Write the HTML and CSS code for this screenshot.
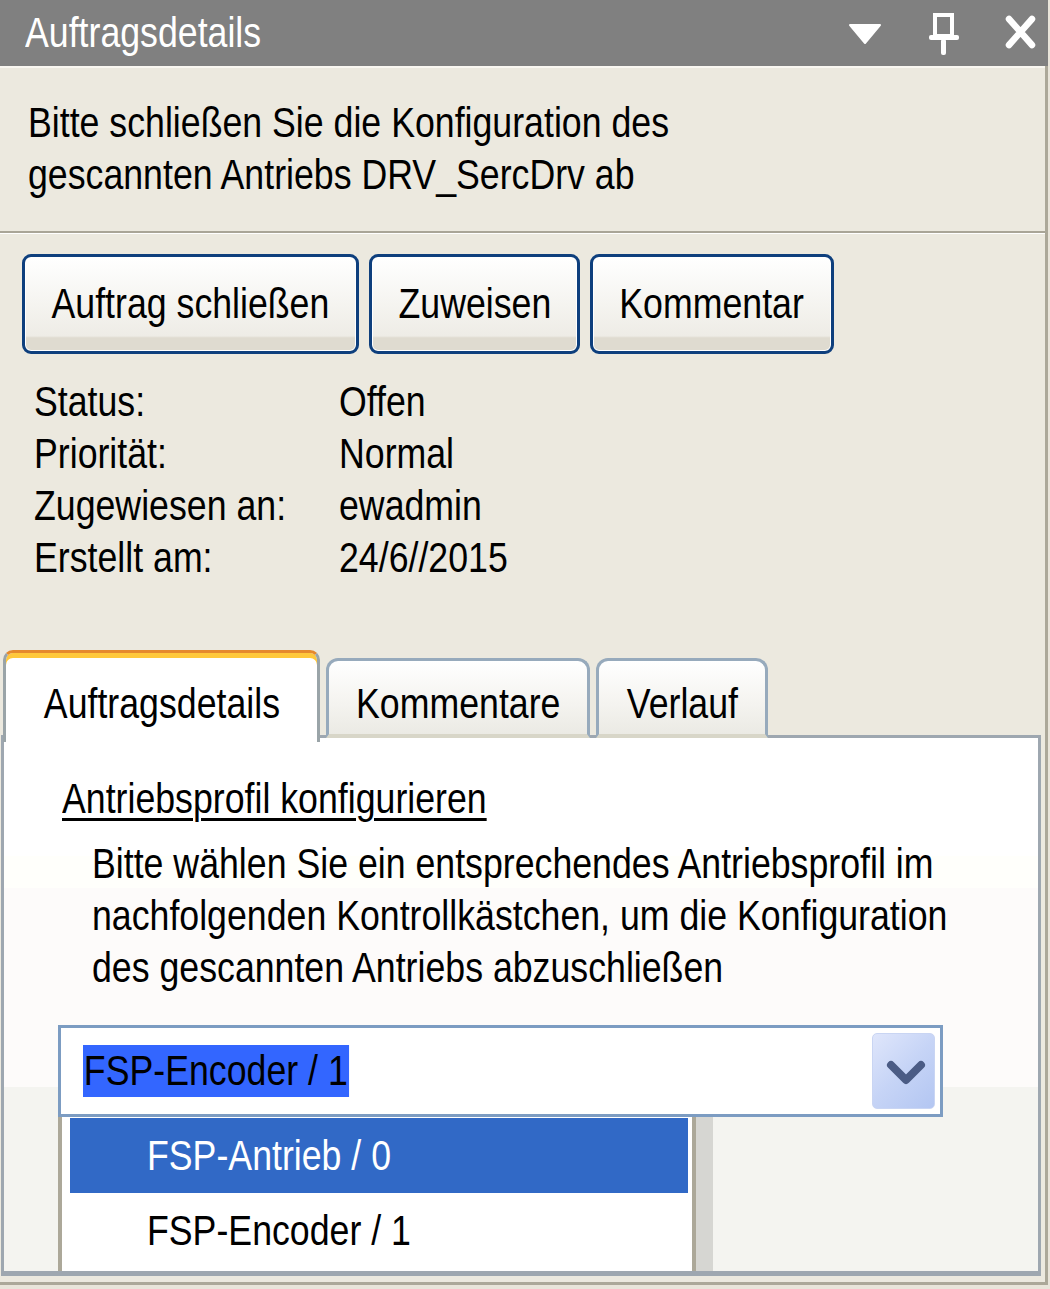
FILE: index.html
```html
<!doctype html>
<html lang="de">
 <head>
  <meta charset="UTF-8">
  <title>Auftragsdetails</title>
  <link rel="stylesheet" href="styles.css">
 </head>
 <body>
  <div class="window">
   <header class="titlebar">
    <span class="title txt">Auftragsdetails</span>
    <div class="title-tools">
     <svg class="tool tool-menu" width="34" height="66" viewBox="0 0 34 66"><polygon points="2,25 32,25 17,43" fill="#fff" stroke="#fff" stroke-width="2" stroke-linejoin="round"/></svg>
     <svg class="tool tool-pin" width="34" height="66" viewBox="0 0 34 66">
      <rect x="9" y="15" width="17" height="21" fill="none" stroke="#fff" stroke-width="4"/>
      <rect x="3" y="35" width="30" height="5" rx="2" fill="#fff"/>
      <rect x="15" y="39" width="5" height="16" rx="2" fill="#fff"/>
     </svg>
     <svg class="tool tool-close" width="37" height="66" viewBox="0 0 37 66"><path d="M6 19 L29 45 M29 19 L6 45" stroke="#fff" stroke-width="6.5" stroke-linecap="round"/></svg>
    </div>
   </header>
   <div class="frame">
    <p class="message"><span class="txt">Bitte schließen Sie die Konfiguration des<br>gescannten Antriebs DRV_SercDrv ab</span></p>
    <div class="actions">
     <button class="btn btn-close"><span class="txt">Auftrag schließen</span></button>
     <button class="btn btn-assign"><span class="txt">Zuweisen</span></button>
     <button class="btn btn-comment"><span class="txt">Kommentar</span></button>
    </div>
    <dl class="details">
     <dt><span class="txt">Status:</span></dt><dd><span class="txt">Offen</span></dd>
     <dt><span class="txt">Priorität:</span></dt><dd><span class="txt">Normal</span></dd>
     <dt><span class="txt">Zugewiesen an:</span></dt><dd><span class="txt">ewadmin</span></dd>
     <dt><span class="txt">Erstellt am:</span></dt><dd><span class="txt">24/6//2015</span></dd>
    </dl>
    <nav class="tabs">
     <div class="tab tab-active"><span class="txt">Auftragsdetails</span></div>
     <div class="tab tab-comments"><span class="txt">Kommentare</span></div>
     <div class="tab tab-history"><span class="txt">Verlauf</span></div>
    </nav>
    <section class="panel">
     <h2 class="panel-title"><span class="txt">Antriebsprofil konfigurieren</span></h2>
     <p class="panel-text"><span class="txt">Bitte wählen Sie ein entsprechendes Antriebsprofil im<br>nachfolgenden Kontrollkästchen, um die Konfiguration<br>des gescannten Antriebs abzuschließen</span></p>
     <div class="combo">
      <span class="combo-value txt">FSP-Encoder / 1</span>
      <span class="combo-arrow">
       <svg width="62" height="76" viewBox="0 0 62 76"><polyline points="18,31 33,46 48,31" fill="none" stroke="#4b5c85" stroke-width="8" stroke-linecap="round" stroke-linejoin="round"/></svg>
      </span>
     </div>
     <ul class="combo-list">
      <li class="option option-selected"><span class="txt">FSP-Antrieb / 0</span></li>
      <li class="option"><span class="txt">FSP-Encoder / 1</span></li>
     </ul>
    </section>
   </div>
  </div>
 </body>
</html>
```
FILE: styles.css
```css
* {
  margin: 0;
  padding: 0;
  box-sizing: border-box;
}

html, body {
  background: #e9e5da;
}

body {
  width: 1050px;
  height: 1289px;
  overflow: hidden;
  font-family: 'Liberation Sans', Arial, sans-serif;
  font-size: 42px;
  line-height: 52px;
  color: #000;
}

/* the UI font is a narrow grotesque: squeeze Liberation Sans to match */
.txt {
  display: inline-block;
  white-space: nowrap;
  transform: scaleX(0.85);
  transform-origin: left center;
}

.window {
  width: 1048px;
}

.titlebar {
  height: 66px;
  background: #808080;
  display: flex;
  align-items: center;
  justify-content: space-between;
  padding: 0 8px 0 25px;
}

.title {
  color: #fff;
  line-height: 66px;
}

.title-tools {
  display: flex;
  gap: 44px;
}

.tool {
  display: block;
}

.tool-close {
  margin-left: -1px;
}

.frame {
  background: #ece9df;
  border-right: 3px solid #aca899;
  border-bottom: 3px solid #aca899;
  padding-bottom: 6px;
}

.message {
  border-top: 2px solid #f9f7f1;
  border-bottom: 2px solid #a9a597;
  box-shadow: 0 1px 0 #fff;
  padding: 29px 0 30px 28px;
}

.actions {
  display: flex;
  gap: 10px;
  padding: 21px 0 0 22px;
}

.btn {
  height: 100px;
  font: inherit;
  color: #000;
  border: 3px solid #0e3f7d;
  border-radius: 9px;
  background: linear-gradient(#ffffff 0%, #f5f4f0 50%, #eeece6 84%, #dfdbd0 86%, #dfdbd0 100%);
  box-shadow: inset 0 0 0 1px #fff;
  cursor: pointer;
}

.btn .txt,
.tab .txt {
  transform-origin: center center;
}

.btn-close { width: 337px; }
.btn-assign { width: 211px; }
.btn-comment { width: 244px; }

.details {
  display: grid;
  grid-template-columns: 305px auto;
  padding: 22px 0 0 34px;
}

.details dd {
  margin: 0;
}

.tabs {
  display: flex;
  align-items: flex-end;
  gap: 6px;
  height: 88px;
  margin: 66px 0 -3px 3px;
  position: relative;
  z-index: 1;
}

.tab {
  height: 80px;
  border: 3px solid #97aabc;
  border-bottom: 4px solid #d8d6c8;
  border-radius: 12px 12px 0 0;
  background: linear-gradient(#ffffff, #f4f3ef 60%, #ebeae4);
  padding-top: 17px;
  text-align: center;
}

.tab-active {
  height: 92px;
  width: 317px;
  border: 3px solid #9aa4a8;
  border-top: 3px solid #e5892d;
  border-bottom: none;
  border-radius: 10px 10px 0 0;
  background: #fff;
  box-shadow: inset 0 5px 0 #ffc83b;
  padding-top: 25px;
  margin-bottom: -4px;
}

.tab-comments { width: 264px; }
.tab-history { width: 172px; }

.panel {
  height: 541px;
  width: 1040px;
  margin-left: 1px;
  border: 3px solid #9ea7b0;
  border-bottom-width: 5px;
  background: linear-gradient(#ffffff 0, #ffffff 118px, #fffffb 118px, #fffffb 150px, #fdfbfa 150px, #fdfbfa 349px, #f4f4f0 349px);
  overflow: hidden;
  padding: 35px 0 0 54px;
}

.panel-title {
  font-size: inherit;
  font-weight: normal;
  padding-left: 4px;
}

.panel-title .txt {
  text-decoration: underline;
  text-underline-offset: 5px;
  text-decoration-thickness: 3px;
}

.panel-text {
  margin-top: 13px;
  padding-left: 34px;
}

.combo {
  margin-top: 31px;
  width: 885px;
  height: 92px;
  border: 3px solid #7c9cc2;
  background: #fff;
  display: flex;
  align-items: center;
  justify-content: space-between;
  padding: 0 5px 0 22px;
}

.combo-value {
  background: #3366ff;
  line-height: 52px;
  padding: 0 2px 0 1px;
}

.combo-arrow {
  display: block;
  width: 63px;
  height: 76px;
  border: 1px solid #c9d5f3;
  border-radius: 5px;
  background: linear-gradient(135deg, #dfe6fb 0%, #c6d4f6 50%, #b3c6f2 100%);
}

.combo-arrow svg {
  display: block;
}

.combo-list {
  list-style: none;
  width: 655px;
  height: 160px;
  background: #fff;
  border-left: 4px solid #aca899;
  border-right: 17px solid #d6d6d2;
  box-shadow: inset -4px 0 0 #aca899;
  padding: 1px 8px 0 8px;
}

.option {
  height: 75px;
  line-height: 75px;
  padding-left: 77px;
}

.option + .option {
  height: 76px;
}

.option-selected {
  background: #3169c6;
  color: #fff;
}
```
